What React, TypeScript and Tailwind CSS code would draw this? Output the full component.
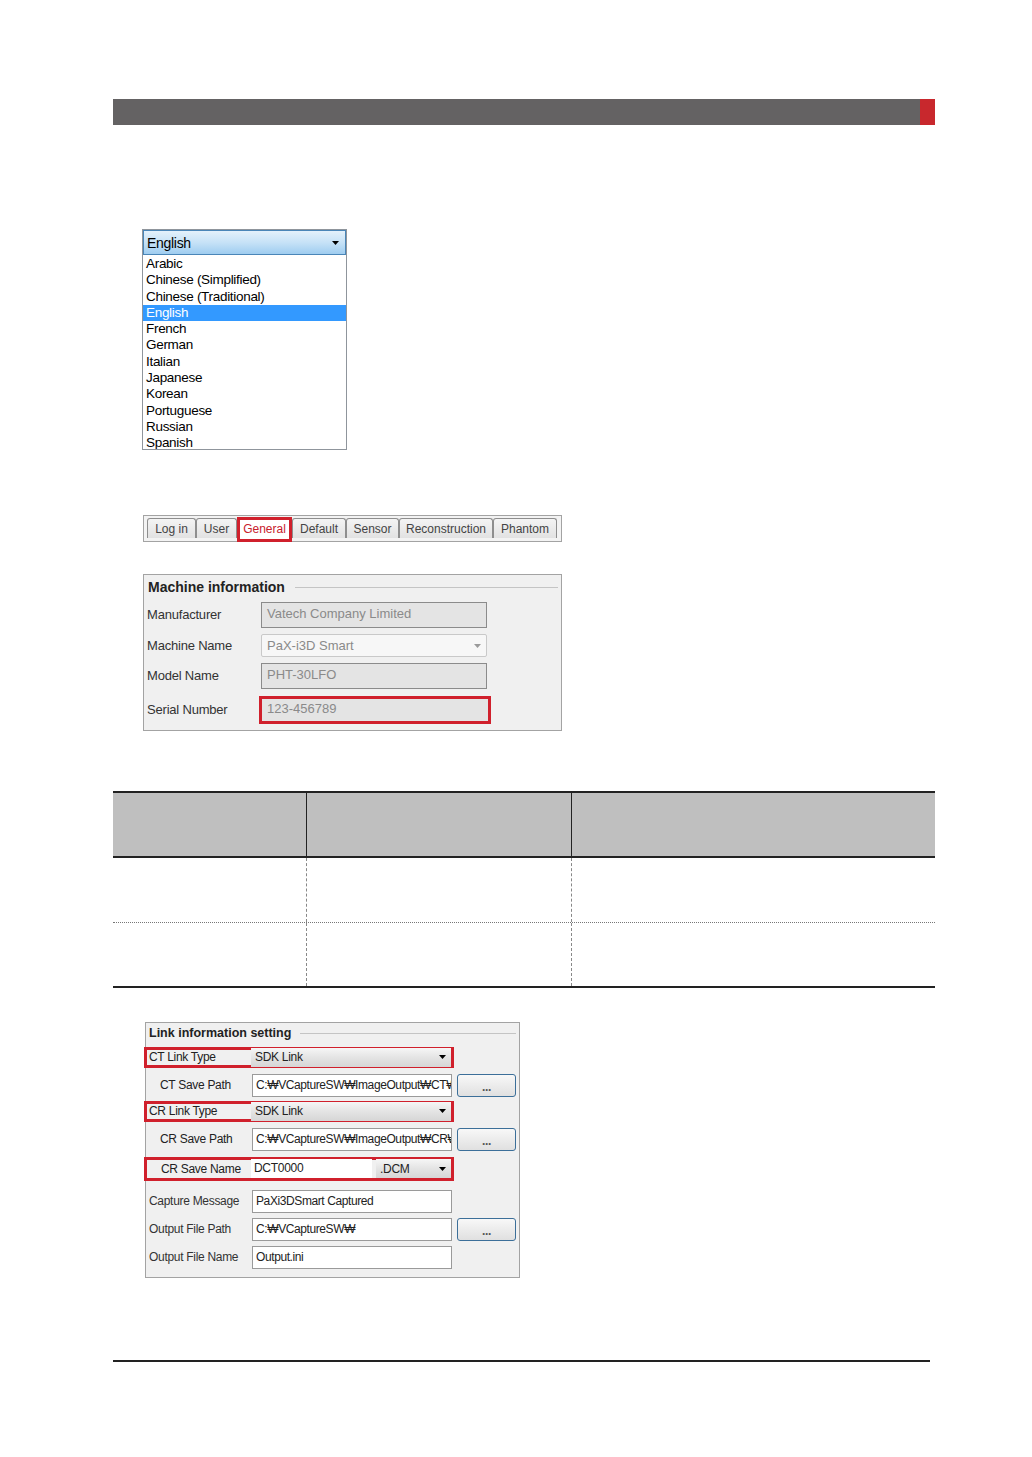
import React from 'react';

const languages = [
  'Arabic',
  'Chinese (Simplified)',
  'Chinese (Traditional)',
  'English',
  'French',
  'German',
  'Italian',
  'Japanese',
  'Korean',
  'Portuguese',
  'Russian',
  'Spanish',
];

const tabs = [
  { label: 'Log in', w: 'w-[49px]' },
  { label: 'User', w: 'w-[41px]' },
  { label: 'General', w: 'w-[55px]', active: true },
  { label: 'Default', w: 'w-[54px]' },
  { label: 'Sensor', w: 'w-[53px]' },
  { label: 'Reconstruction', w: 'w-[94px]' },
  { label: 'Phantom', w: 'w-[64px]' },
];

function Caret({ color = '#000' }: { color?: string }) {
  return (
    <svg width="7" height="4" viewBox="0 0 7 4">
      <path d="M0 0h7L3.5 4z" fill={color} />
    </svg>
  );
}

function LanguageList() {
  return (
    <div className="ml-[29px] mt-[104px] h-[221px] w-[205px] overflow-hidden border border-[#8f959c] bg-white text-[13.5px] leading-[16.3px] tracking-[-0.3px] text-black">
      <div className="flex h-[25px] items-center justify-between border border-[#4a86b8] bg-gradient-to-b from-[#e4f1fb] via-[#c6e2f7] to-[#9fcdf0] pl-[3px] pr-[6px]">
        <span className="mt-[2px] text-[14px]">English</span>
        <Caret />
      </div>
      <div className="pl-[3px] pt-[1px]">
        {languages.map((l) => (
          <div
            key={l}
            className={l === 'English' ? '-ml-[3px] bg-[#3399ff] pl-[3px] text-white' : ''}
          >
            {l}
          </div>
        ))}
      </div>
    </div>
  );
}

function TabStrip() {
  return (
    <div className="ml-[30px] mt-[65px] flex h-[27px] w-[419px] items-start border border-[#a3a3a3] bg-[#f3f3f3] pl-[3px] pt-[2px] text-[12px] text-[#444]">
      {tabs.map((t) =>
        t.active ? (
          <div
            key={t.label}
            className={`${t.w} -mt-[1px] flex h-[25px] items-center justify-center border-[3px] border-[#d0202c] bg-white pb-[2px] text-[#c8202c]`}
          >
            {t.label}
          </div>
        ) : (
          <div
            key={t.label}
            className={`${t.w} flex h-[20px] items-center justify-center rounded-t-[3px] border border-b-0 border-[#8e8e8e] bg-gradient-to-b from-[#f4f4f4] to-[#e2e2e2]`}
          >
            {t.label}
          </div>
        ),
      )}
    </div>
  );
}

function FieldRow({
  label,
  value,
  combo,
  highlight,
}: {
  label: string;
  value: string;
  combo?: boolean;
  highlight?: boolean;
}) {
  const box = combo
    ? 'h-[23px] rounded-[2px] border border-[#c9c9c9] bg-[#f7f7f7]'
    : 'h-[26px] border border-[#8b8b8b] bg-[#e4e4e4]';
  return (
    <div className="flex items-center">
      <div className="w-[117px] pl-[3px] text-[13px] tracking-[-0.2px] text-[#333]">{label}</div>
      <div className={highlight ? '-ml-[2px] border-[3px] border-[#d0202c] p-0' : ''}>
        <div
          className={`flex w-[226px] items-center justify-between pl-[5px] pr-[5px] text-[13px] text-[#8a8a8a] ${
            highlight ? 'h-[22px] w-[225px] bg-[#e4e4e4]' : box
          }`}
        >
          <span className={combo ? 'mt-[1px]' : '-mt-[3px]'}>{value}</span>
          {combo && <Caret color="#9a9a9a" />}
        </div>
      </div>
    </div>
  );
}

function MachineInfo() {
  return (
    <div className="ml-[30px] mt-[32px] h-[157px] w-[419px] border border-[#a3a3a3] bg-[#f0f0f0]">
      <div className="flex items-center pl-[4px] pt-[2px]">
        <span className="text-[14px] font-bold text-[#222]">Machine information</span>
        <div className="ml-[10px] mr-[3px] h-px flex-1 bg-[#c4c4c4]" />
      </div>
      <div className="mt-[4px] flex flex-col gap-[6px]">
        <FieldRow label="Manufacturer" value="Vatech Company Limited" />
        <FieldRow label="Machine Name" value="PaX-i3D Smart" combo />
        <FieldRow label="Model Name" value="PHT-30LFO" />
        <div className="mt-[1px]">
          <FieldRow label="Serial Number" value="123-456789" highlight />
        </div>
      </div>
    </div>
  );
}

function DataTable() {
  const rows = [0, 1];
  return (
    <div className="mt-[60px] w-[822px]">
      <div className="flex h-[67px] border-t-2 border-b-2 border-[#222] bg-[#bfbfbf]">
        <div className="w-[194px] border-r border-[#222]" />
        <div className="w-[265px] border-r border-[#222]" />
        <div className="flex-1" />
      </div>
      {rows.map((r) => (
        <div
          key={r}
          className={`flex h-[65px] ${r === 0 ? 'border-b border-dotted border-[#777]' : 'border-b-2 border-[#222]'}`}
        >
          <div className="w-[194px] border-r border-dashed border-[#888]" />
          <div className="w-[265px] border-r border-dashed border-[#888]" />
          <div className="flex-1" />
        </div>
      ))}
    </div>
  );
}

function Combo({ value, w }: { value: string; w: string }) {
  return (
    <div
      className={`${w} flex h-[19px] items-center justify-between bg-gradient-to-b from-[#f6f6f6] via-[#e4e4e4] to-[#d6d6d6] pl-[4px] pr-[5px]`}
    >
      <span>{value}</span>
      <Caret />
    </div>
  );
}

function TextBox({ value, w = 'w-[200px]' }: { value: string; w?: string }) {
  return (
    <div className={`${w} flex h-[23px] items-start overflow-hidden whitespace-nowrap border border-[#9a9a9a] bg-white pl-[3px] pt-[1px] tracking-[-0.4px]`}>
      {value}
    </div>
  );
}

function DotsButton() {
  return (
    <div className="ml-[5px] flex h-[23px] w-[59px] items-center justify-center rounded-[3px] border border-[#3c6f99] bg-gradient-to-b from-[#f8f8f8] to-[#e0e0e0] pt-[3px] text-[12px] font-bold leading-none text-[#555]">
      ...
    </div>
  );
}

function LinkSettings() {
  return (
    <div className="ml-[32px] mt-[34px] h-[256px] w-[375px] border border-[#a3a3a3] bg-[#f0f0f0] text-[12px] tracking-[-0.3px] text-[#222]">
      <div className="flex items-center pl-[3px] pt-[1px]">
        <span className="text-[12.5px] font-bold tracking-normal">Link information setting</span>
        <div className="ml-[9px] mr-[3px] h-px flex-1 bg-[#c4c4c4]" />
      </div>

      <div className="-ml-[2px] mt-[4px] flex h-[21px] w-[310px] items-center border-[3px] border-[#d0202c]">
        <div className="w-[104px] pl-[2px]">CT Link Type</div>
        <Combo value="SDK Link" w="w-[200px]" />
      </div>

      <div className="mt-[6px] flex items-center">
        <div className="w-[106px] pl-[14px]">CT Save Path</div>
        <TextBox value="C:₩VCaptureSW₩ImageOutput₩CT₩" />
        <DotsButton />
      </div>

      <div className="-ml-[2px] mt-[4px] flex h-[21px] w-[310px] items-center border-[3px] border-[#d0202c]">
        <div className="w-[104px] pl-[2px]">CR Link Type</div>
        <Combo value="SDK Link" w="w-[200px]" />
      </div>

      <div className="mt-[6px] flex items-center">
        <div className="w-[106px] pl-[14px]">CR Save Path</div>
        <TextBox value="C:₩VCaptureSW₩ImageOutput₩CR₩" />
        <DotsButton />
      </div>

      <div className="-ml-[2px] mt-[6px] flex h-[24px] w-[310px] items-center border-[3px] border-[#d0202c]">
        <div className="w-[104px] pl-[14px]">CR Save Name</div>
        <div className="flex h-[19px] w-[121px] items-start bg-white pl-[3px]">DCT0000</div>
        <div className="ml-[4px] w-[75px]">
          <Combo value=".DCM" w="w-[75px]" />
        </div>
      </div>

      <div className="mt-[9px] flex items-center">
        <div className="w-[106px] pl-[3px] text-[#333]">Capture Message</div>
        <TextBox value="PaXi3DSmart Captured" />
      </div>

      <div className="mt-[5px] flex items-center">
        <div className="w-[106px] pl-[3px] text-[#333]">Output File Path</div>
        <TextBox value="C:₩VCaptureSW₩" />
        <DotsButton />
      </div>

      <div className="mt-[5px] flex items-center">
        <div className="w-[106px] pl-[3px] text-[#333]">Output File Name</div>
        <TextBox value="Output.ini" />
      </div>
    </div>
  );
}

export default function App() {
  return (
    <div className="h-[1457px] w-[1032px] bg-white font-['Liberation_Sans','DejaVu_Sans',sans-serif]">
      <div className="px-[97px] pt-[99px] pl-[113px]">
        <div className="flex h-[26px] w-[822px]">
          <div className="flex-1 bg-[#646263]" />
          <div className="w-[15px] bg-[#c8282d]" />
        </div>

        <LanguageList />
        <TabStrip />
        <MachineInfo />
        <DataTable />
        <LinkSettings />

        <div className="mt-[82px] h-[2px] w-[817px] bg-[#222]" />
      </div>
    </div>
  );
}
